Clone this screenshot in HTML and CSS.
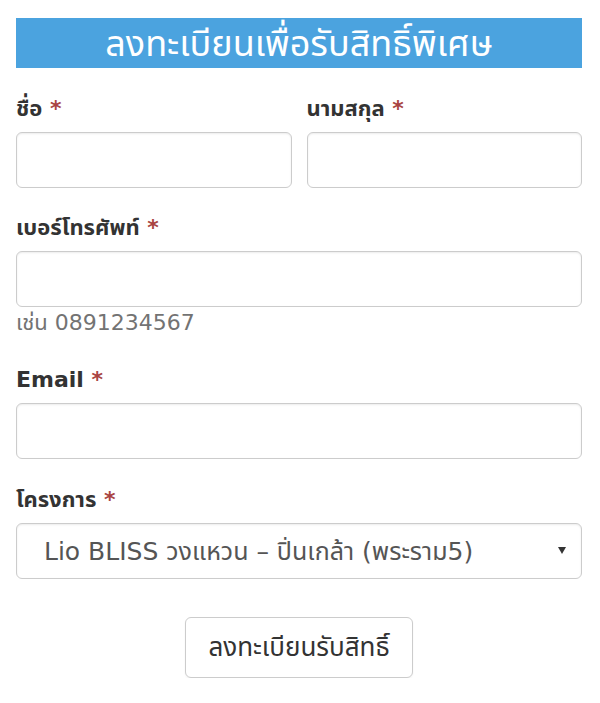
FILE: index.html
```html
<!DOCTYPE html>
<html lang="th">
<head>
<meta charset="utf-8">
<title>ลงทะเบียนเพื่อรับสิทธิ์พิเศษ</title>
<link rel="stylesheet" href="styles.css">
</head>
<body>
<form class="reg">
  <h2 class="banner">ลงทะเบียนเพื่อรับสิทธิ์พิเศษ</h2>
  <div class="row">
    <div class="group">
      <label class="lbl">ชื่อ <span class="req">*</span></label>
      <input class="ctl" type="text">
    </div>
    <div class="group">
      <label class="lbl">นามสกุล <span class="req">*</span></label>
      <input class="ctl" type="text">
    </div>
  </div>
  <div class="group g-phone">
    <label class="lbl">เบอร์โทรศัพท์ <span class="req">*</span></label>
    <input class="ctl" type="text">
    <div class="help">เช่น 0891234567</div>
  </div>
  <div class="group g-email">
    <label class="lbl">Email <span class="req">*</span></label>
    <input class="ctl" type="text">
  </div>
  <div class="group g-project">
    <label class="lbl">โครงการ <span class="req">*</span></label>
    <div class="sel-wrap">
      <select class="ctl sel">
        <option>Lio BLISS วงแหวน – ปิ่นเกล้า (พระราม5)</option>
      </select>
      <span class="caret"></span>
    </div>
  </div>
  <div class="actions">
    <button type="button" class="btn">ลงทะเบียนรับสิทธิ์</button>
  </div>
</form>
</body>
</html>
```

FILE: styles.css
```css
* { box-sizing: border-box; }
html, body { margin: 0; padding: 0; background: #fff; }
body {
  font-family: "DejaVu Sans", "Noto Sans Thai", sans-serif;
  color: #333;
}
.reg {
  width: 566px;
  margin-left: 16px;
  padding-top: 18px;
  display: flex;
  flex-direction: column;
}
.banner {
  margin: 0;
  height: 50px;
  background: #4ba3df;
  color: #fff;
  font-family: "Noto Sans", "Noto Sans Thai", sans-serif;
  font-weight: normal;
  font-size: 36px;
  line-height: 50px;
  text-align: center;
}
.row {
  display: flex;
  gap: 15px;
  margin-top: 26px;
}
.row .group { flex: 1; margin-top: 0; }
.group {
  display: flex;
  flex-direction: column;
  margin-top: 24px;
}
.g-phone { margin-top: 25px; }
.lbl {
  font-size: 22px;
  font-weight: bold;
  line-height: 30px;
  height: 30px;
  margin-bottom: 8px;
  color: #333;
}
.req { color: #a94442; }
.ctl {
  height: 56px;
  width: 100%;
  border: 1px solid #ccc;
  border-radius: 6px;
  box-shadow: inset 0 1px 2px rgba(0,0,0,0.08);
  background: #fff;
  font-family: inherit;
  font-size: 22px;
  color: #555;
  padding: 0 20px;
  margin: 0;
}
.help {
  font-size: 22px;
  line-height: 28px;
  color: #737373;
  margin-top: 2px;
}
.g-email { margin-top: 28px; }
.g-project { margin-top: 26px; }
.sel-wrap { position: relative; }
.sel {
  appearance: none;
  -webkit-appearance: none;
  padding-left: 27px;
  font-size: 25px;
  color: #555;
}
.caret {
  position: absolute;
  right: 16px;
  top: 24px;
  width: 0;
  height: 0;
  border-left: 4px solid transparent;
  border-right: 4px solid transparent;
  border-top: 7px solid #333;
}
.actions {
  display: flex;
  justify-content: center;
  margin-top: 38px;
}
.btn {
  width: 228px;
  height: 61px;
  border: 1px solid #ccc;
  border-radius: 6px;
  background: #fff;
  font-family: inherit;
  font-size: 26px;
  color: #333;
  padding: 0;
  box-shadow: 0 1px 2px rgba(0,0,0,0.05);
}
```
